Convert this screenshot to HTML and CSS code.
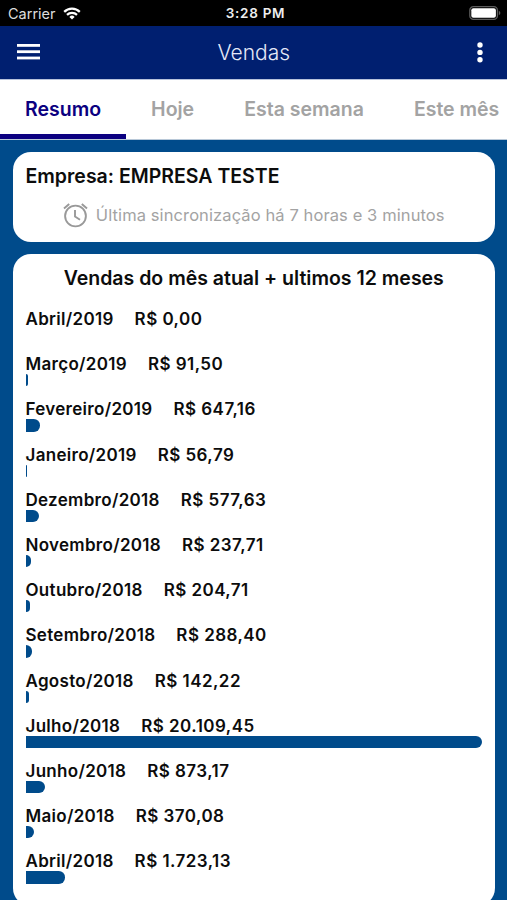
FILE: index.html
```html
<!DOCTYPE html>
<html lang="pt-BR">
<head>
    <meta charset="UTF-8">
    <meta name="viewport" content="width=device-width, initial-scale=1.0">
    <title>Vendas</title>
    <link rel="stylesheet" href="styles.css">
</head>
<body>
    <div class="status-bar">
        <div class="carrier">
            <span>Carrier</span>
            <svg class="wifi" width="18" height="13" viewBox="0 0 18 13" fill="none" stroke="#fff" stroke-width="2.2">
                <path d="M1.2 4.9a11 11 0 0 1 15.6 0"/>
                <path d="M4 7.9a7.1 7.1 0 0 1 10 0"/>
                <path d="M9 12.6l-2.6-2.7a3.7 3.7 0 0 1 5.2 0z" fill="#fff" stroke="none"/>
            </svg>
        </div>
        <span class="time">3:28 PM</span>
        <svg class="battery" width="32" height="14" viewBox="0 0 32 14">
            <rect x=".8" y=".7" width="27.6" height="12.6" rx="3.6" fill="none" stroke="#5c5c5c" stroke-width="1.3"/>
            <rect x="2.3" y="2.2" width="24.6" height="9.6" rx="2" fill="#fff"/>
            <path d="M29.8 4.8q1.6.8 1.6 2.2t-1.6 2.2z" fill="#5c5c5c"/>
        </svg>
    </div>

    <header class="navbar">
        <svg class="menu" width="23" height="16" viewBox="0 0 23 16" fill="#fff">
            <rect y="0" width="23" height="2.8"/>
            <rect y="6.3" width="23" height="2.8"/>
            <rect y="12.6" width="23" height="2.8"/>
        </svg>
        <h1 class="title">Vendas</h1>
        <svg class="more" width="6" height="21" viewBox="0 0 6 21" fill="#fff">
            <circle cx="3" cy="3" r="2.7"/>
            <circle cx="3" cy="10.4" r="2.7"/>
            <circle cx="3" cy="17.8" r="2.7"/>
        </svg>
    </header>

    <nav class="tabs">
        <a class="tab active"><span>Resumo</span></a>
        <a class="tab"><span>Hoje</span></a>
        <a class="tab"><span>Esta semana</span></a>
        <a class="tab"><span>Este mês</span></a>
    </nav>

    <main class="content">
        <section class="card company">
            <h2 class="company-name">Empresa: EMPRESA TESTE</h2>
            <p class="sync">
                <svg width="25" height="26" viewBox="0 0 25 26" fill="none" stroke="#999" stroke-width="1.9">
                    <circle cx="12.5" cy="14" r="10.4"/>
                    <path d="M12 8v6.6l5 3.2"/>
                    <path d="M1 6.5L6.2 2M24 6.5L18.8 2"/>
                </svg>
                <span>Última sincronização há 7 horas e 3 minutos</span>
            </p>
        </section>

        <section class="card sales">
            <h2 class="sales-title">Vendas do mês atual + ultimos 12 meses</h2>
            <ul class="months">
                <li><p class="label"><span>Abril/2019</span><span class="amount">R$ 0,00</span></p><div class="bar" style="width: 0"></div></li>
                <li><p class="label"><span>Março/2019</span><span class="amount">R$ 91,50</span></p><div class="bar" style="width: 0.455%"></div></li>
                <li><p class="label"><span>Fevereiro/2019</span><span class="amount">R$ 647,16</span></p><div class="bar" style="width: 3.218%"></div></li>
                <li><p class="label"><span>Janeiro/2019</span><span class="amount">R$ 56,79</span></p><div class="bar" style="width: 0.282%"></div></li>
                <li><p class="label"><span>Dezembro/2018</span><span class="amount">R$ 577,63</span></p><div class="bar" style="width: 2.872%"></div></li>
                <li><p class="label"><span>Novembro/2018</span><span class="amount">R$ 237,71</span></p><div class="bar" style="width: 1.182%"></div></li>
                <li><p class="label"><span>Outubro/2018</span><span class="amount">R$ 204,71</span></p><div class="bar" style="width: 1.018%"></div></li>
                <li><p class="label"><span>Setembro/2018</span><span class="amount">R$ 288,40</span></p><div class="bar" style="width: 1.434%"></div></li>
                <li><p class="label"><span>Agosto/2018</span><span class="amount">R$ 142,22</span></p><div class="bar" style="width: 0.707%"></div></li>
                <li><p class="label"><span>Julho/2018</span><span class="amount">R$ 20.109,45</span></p><div class="bar" style="width: 100%"></div></li>
                <li><p class="label"><span>Junho/2018</span><span class="amount">R$ 873,17</span></p><div class="bar" style="width: 4.342%"></div></li>
                <li><p class="label"><span>Maio/2018</span><span class="amount">R$ 370,08</span></p><div class="bar" style="width: 1.84%"></div></li>
                <li><p class="label"><span>Abril/2018</span><span class="amount">R$ 1.723,13</span></p><div class="bar" style="width: 8.569%"></div></li>
            </ul>
        </section>
    </main>
</body>
</html>
```
FILE: styles.css
```css
* {
    box-sizing: border-box;
    margin: 0;
    padding: 0;
}

body {
    height: 900px;
    overflow: hidden;
    background-color: #004b8b;
    color: #0c0c0c;
    font-family: Inter, "Liberation Sans", sans-serif;
}

.status-bar {
    display: grid;
    grid-template-columns: 1fr auto 1fr;
    align-items: center;
    height: 25.5px;
    padding: 1px 6px 0 8px;
    background-color: #000;
    color: #fff;
    font-size: 14.5px;
}

.carrier {
    display: flex;
    align-items: center;
    gap: 7px;
    color: #ddd;
}

.time {
    font-size: 13.5px;
    font-weight: 600;
    letter-spacing: 0.7px;
    padding-left: 2px;
    color: #eee;
}

.battery {
    justify-self: end;
}

.navbar {
    display: grid;
    grid-template-columns: 1fr auto 1fr;
    align-items: center;
    height: 53px;
    padding: 0 24px 0 16.5px;
    background-color: #001f70;
    color: #e6eaf8;
}

.title {
    padding-left: 8px;
    font-size: 21px;
    font-weight: 300;
}

.more {
    justify-self: end;
}

.tabs {
    display: flex;
    height: 61px;
    overflow: hidden;
    background-color: #fff;
    border-top: 1px solid #b8c2dc;
    border-bottom: 1px solid #b8c8d8;
}

.tab {
    flex: none;
    padding: 0 25px;
    line-height: 59px;
    font-size: 19.5px;
    font-weight: 600;
    color: #a3a3a3;
    white-space: nowrap;
}

.active {
    color: #0b0080;
    border-bottom: 5px solid #0b0080;
}

.content {
    padding: 12.5px 12.5px 0 13px;
}

.card {
    background-color: #fff;
    border-radius: 18px;
}

.company {
    height: 89.5px;
    padding: 12px 12.5px;
}

.company-name {
    font-size: 19.5px;
    font-weight: 600;
    line-height: 25px;
}

.sync {
    display: flex;
    align-items: center;
    justify-content: center;
    gap: 8px;
    margin-top: 13px;
    font-size: 16.5px;
    letter-spacing: 0.1px;
    color: #a3a3a3;
    white-space: nowrap;
}

.sales {
    height: 652px;
    margin-top: 12.5px;
    padding: 12px 12.5px;
}

.sales-title {
    font-size: 19.5px;
    font-weight: 600;
    line-height: 25px;
    text-align: center;
    white-space: nowrap;
}

.months {
    margin-top: 17px;
    list-style: none;
}

.months li {
    height: 45.2px;
}

.label {
    display: flex;
    gap: 21px;
    padding-top: 1px;
    font-size: 17px;
    font-weight: 600;
    letter-spacing: 0.3px;
    line-height: 20px;
}

.amount {
    letter-spacing: 0.45px;
}

.bar {
    height: 12.3px;
    background-color: #004b8b;
    border-radius: 0 6.2px 6.2px 0;
}
```
